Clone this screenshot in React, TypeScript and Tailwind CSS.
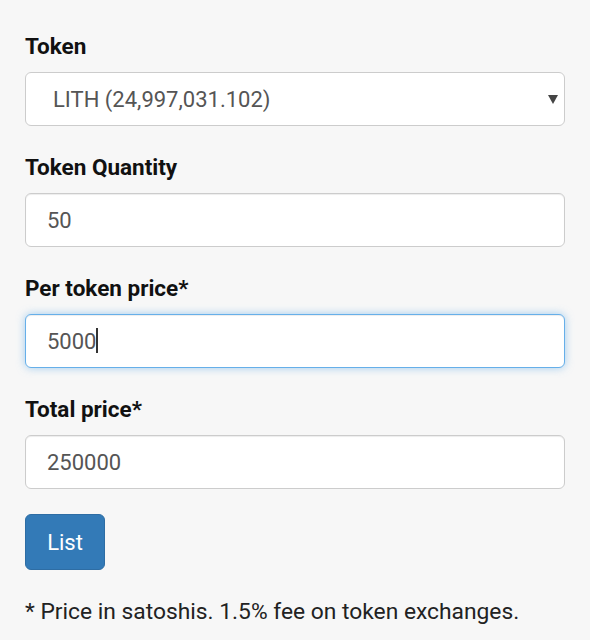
export default function App() {
  const inputClass =
    "block h-[54px] w-full rounded-[6px] border border-[#cccccc] bg-white pl-[21px] pr-3 text-[22px] text-[#555555] shadow-[inset_0_1px_1px_rgba(0,0,0,0.075)] outline-none";
  const labelClass = "mb-[10px] block text-[22.5px] font-bold leading-[32px] text-[#111111]";

  return (
    <div className="min-h-[640px] bg-[#f7f7f7] px-[25px] pt-[30px] font-['Roboto',sans-serif] text-[#333333]">
      <form className="flex flex-col">
        <div className="mb-[25px]">
          <label className={labelClass}>Token</label>
          <div className="relative">
            <select
              defaultValue="LITH"
              className="block h-[54px] w-full appearance-none rounded-[6px] border border-[#cccccc] bg-white pl-[27px] pr-10 text-[22px] text-[#555555] outline-none"
            >
              <option value="LITH">LITH (24,997,031.102)</option>
            </select>
            <svg
              className="pointer-events-none absolute right-[7px] top-[23px]"
              width="10"
              height="9"
              viewBox="0 0 10 9"
            >
              <path d="M0 0 L10 0 L5 9 Z" fill="#444444" />
            </svg>
          </div>
        </div>

        <div className="mb-[25px]">
          <label className={labelClass}>Token Quantity</label>
          <input type="text" defaultValue="50" className={inputClass} />
        </div>

        <div className="mb-[25px]">
          <label className={labelClass}>Per token price*</label>
          <div className="relative">
            <input
              type="text"
              defaultValue="5000"
              className="block h-[54px] w-full rounded-[6px] border border-[#66afe9] bg-white pl-[21px] pr-3 text-[22px] text-[#555555] shadow-[inset_0_1px_1px_rgba(0,0,0,0.075),0_0_8px_rgba(102,175,233,0.6)] outline-none"
            />
            {/* text caret */}
            <span className="pointer-events-none absolute left-[71px] top-[14px] h-[25px] w-[1.5px] bg-[#333333]" />
          </div>
        </div>

        <div className="mb-[25px]">
          <label className={labelClass}>Total price*</label>
          <input type="text" defaultValue="250000" className={inputClass} />
        </div>

        <div>
          <button
            type="button"
            className="h-[56px] w-[80px] rounded-[6px] border border-[#2e6da4] bg-[#337ab7] text-[22px] text-white"
          >
            List
          </button>
        </div>
      </form>

      <p className="mt-[26px] text-[22.8px] leading-[32px] text-[#222222]">
        * Price in satoshis. 1.5% fee on token exchanges.
      </p>
    </div>
  );
}
